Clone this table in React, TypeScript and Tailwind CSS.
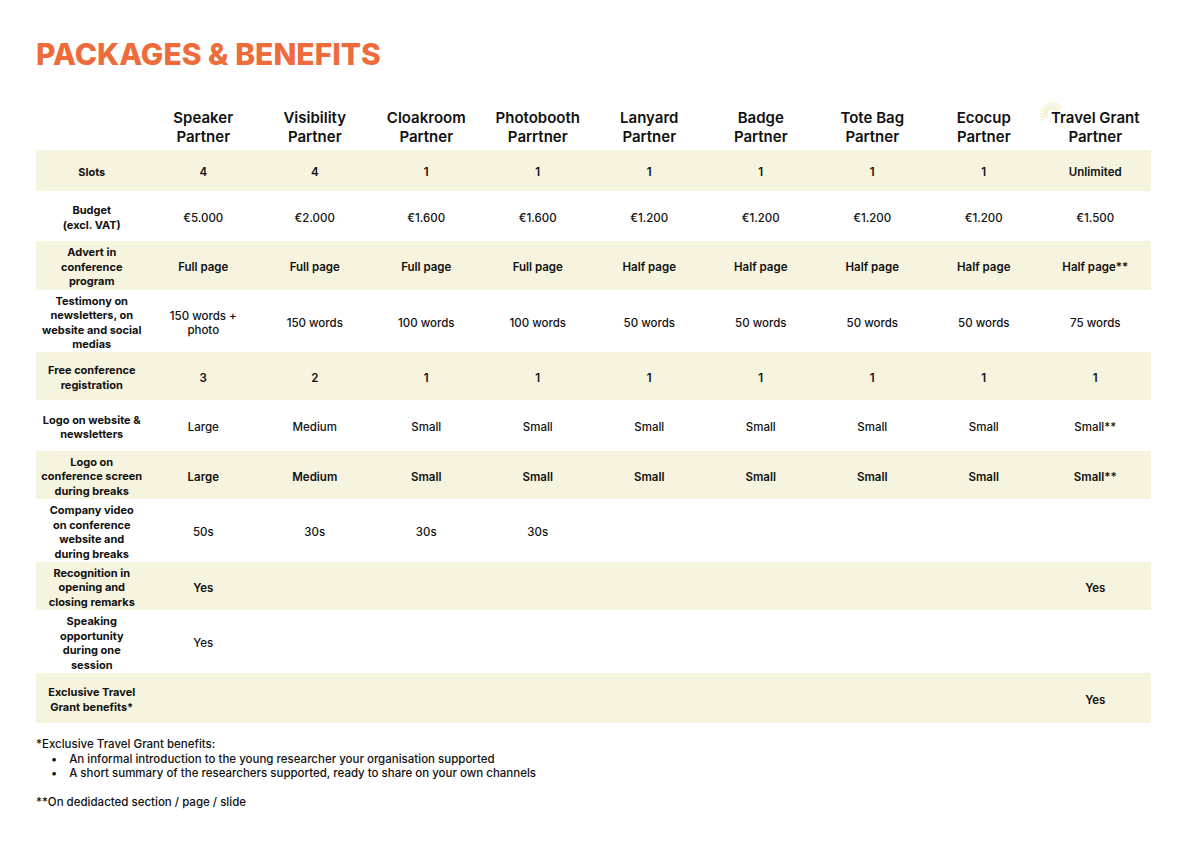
const cols = [
  ["Speaker", "Partner"],
  ["Visibility", "Partner"],
  ["Cloakroom", "Partner"],
  ["Photobooth", "Parrtner"],
  ["Lanyard", "Partner"],
  ["Badge", "Partner"],
  ["Tote Bag", "Partner"],
  ["Ecocup", "Partner"],
  ["Travel Grant", "Partner"],
];

type Row = { label: string[]; values: string[]; h: string; shaded: boolean };

const rows: Row[] = [
  { label: ["Slots"], values: ["4", "4", "1", "1", "1", "1", "1", "1", "Unlimited"], h: "h-[41px]", shaded: true },
  { label: ["Budget", "(excl. VAT)"], values: ["€5.000", "€2.000", "€1.600", "€1.600", "€1.200", "€1.200", "€1.200", "€1.200", "€1.500"], h: "h-[50px]", shaded: false },
  { label: ["Advert in", "conference", "program"], values: ["Full page", "Full page", "Full page", "Full page", "Half page", "Half page", "Half page", "Half page", "Half page**"], h: "h-[49px]", shaded: true },
  { label: ["Testimony on", "newsletters, on", "website and social", "medias"], values: ["150 words +\nphoto", "150 words", "100 words", "100 words", "50 words", "50 words", "50 words", "50 words", "75 words"], h: "h-[62px]", shaded: false },
  { label: ["Free conference", "registration"], values: ["3", "2", "1", "1", "1", "1", "1", "1", "1"], h: "h-[48px]", shaded: true },
  { label: ["Logo on website &", "newsletters"], values: ["Large", "Medium", "Small", "Small", "Small", "Small", "Small", "Small", "Small**"], h: "h-[51px]", shaded: false },
  { label: ["Logo on", "conference screen", "during breaks"], values: ["Large", "Medium", "Small", "Small", "Small", "Small", "Small", "Small", "Small**"], h: "h-[48px]", shaded: true },
  { label: ["Company video", "on conference", "website and", "during breaks"], values: ["50s", "30s", "30s", "30s", "", "", "", "", ""], h: "h-[63px]", shaded: false },
  { label: ["Recognition in", "opening and", "closing remarks"], values: ["Yes", "", "", "", "", "", "", "", "Yes"], h: "h-[48px]", shaded: true },
  { label: ["Speaking", "opportunity", "during one", "session"], values: ["Yes", "", "", "", "", "", "", "", ""], h: "h-[63px]", shaded: false },
  { label: ["Exclusive Travel", "Grant benefits*"], values: ["", "", "", "", "", "", "", "", "Yes"], h: "h-[50px]", shaded: true },
];

const Sunburst = () => (
  <svg width="26" height="24" viewBox="0 0 26 24" className="absolute -left-[14px] -top-[10px]">
    {Array.from({ length: 13 }).map((_, i) => {
      const a = Math.PI * 0.85 + (i / 12) * Math.PI * 0.95;
      const cx = 15, cy = 16;
      const x1 = cx + Math.cos(a) * 5, y1 = cy + Math.sin(a) * 5;
      const x2 = cx + Math.cos(a) * 12, y2 = cy + Math.sin(a) * 12;
      return <line key={i} x1={x1} y1={y1} x2={x2} y2={y2} stroke="#f3edc6" strokeWidth="1.2" strokeLinecap="round" />;
    })}
  </svg>
);

export default function App() {
  return (
    <div className="w-[1191px] h-[842px] bg-white text-[#111] font-['Inter','Liberation_Sans',sans-serif] overflow-hidden">
      <div className="pl-[36px] pt-[34px]">
        <h1 className="text-[30px] leading-[40px] font-extrabold tracking-[0px] text-[#ee6c3b]">
          PACKAGES &amp; BENEFITS
        </h1>
      </div>

      <div className="ml-[36px] mt-[26px] w-[1115px]">
        <div className="grid grid-cols-10 h-[50px] items-center">
          <div />
          {cols.map((c, i) => (
            <div key={i} className="pt-[4px] text-center text-[15px] leading-[19px] font-semibold">
              <span className="relative">
                {i === 8 && <Sunburst />}
                {c[0]}
              </span>
              <br />
              {c[1]}
            </div>
          ))}
        </div>

        {rows.map((r, ri) => (
          <div key={ri} className={`grid grid-cols-10 items-center ${r.h} ${r.shaded ? "bg-[#f6f3de]" : "bg-white"}`}>
            <div className="pt-[3px] text-center text-[11px] leading-[14.5px] font-bold">
              {r.label.map((l, li) => (
                <div key={li}>{l}</div>
              ))}
            </div>
            {r.values.map((v, vi) => (
              <div
                key={vi}
                className={`pt-[4px] text-center text-[11.5px] leading-[14.5px] whitespace-pre-line ${r.shaded ? "font-semibold" : "font-medium"}`}
              >
                {v}
              </div>
            ))}
          </div>
        ))}
      </div>

      <div className="ml-[36px] mt-[14px] text-[11.5px] leading-[14.5px] font-medium">
        <p>*Exclusive Travel Grant benefits:</p>
        <ul className="pl-[15px]">
          <li className="flex gap-[12px]"><span>•</span><span>An informal introduction to the young researcher your organisation supported</span></li>
          <li className="flex gap-[12px]"><span>•</span><span>A short summary of the researchers supported, ready to share on your own channels</span></li>
        </ul>
        <p className="mt-[14px]">**On dedidacted section / page / slide</p>
      </div>
    </div>
  );
}
